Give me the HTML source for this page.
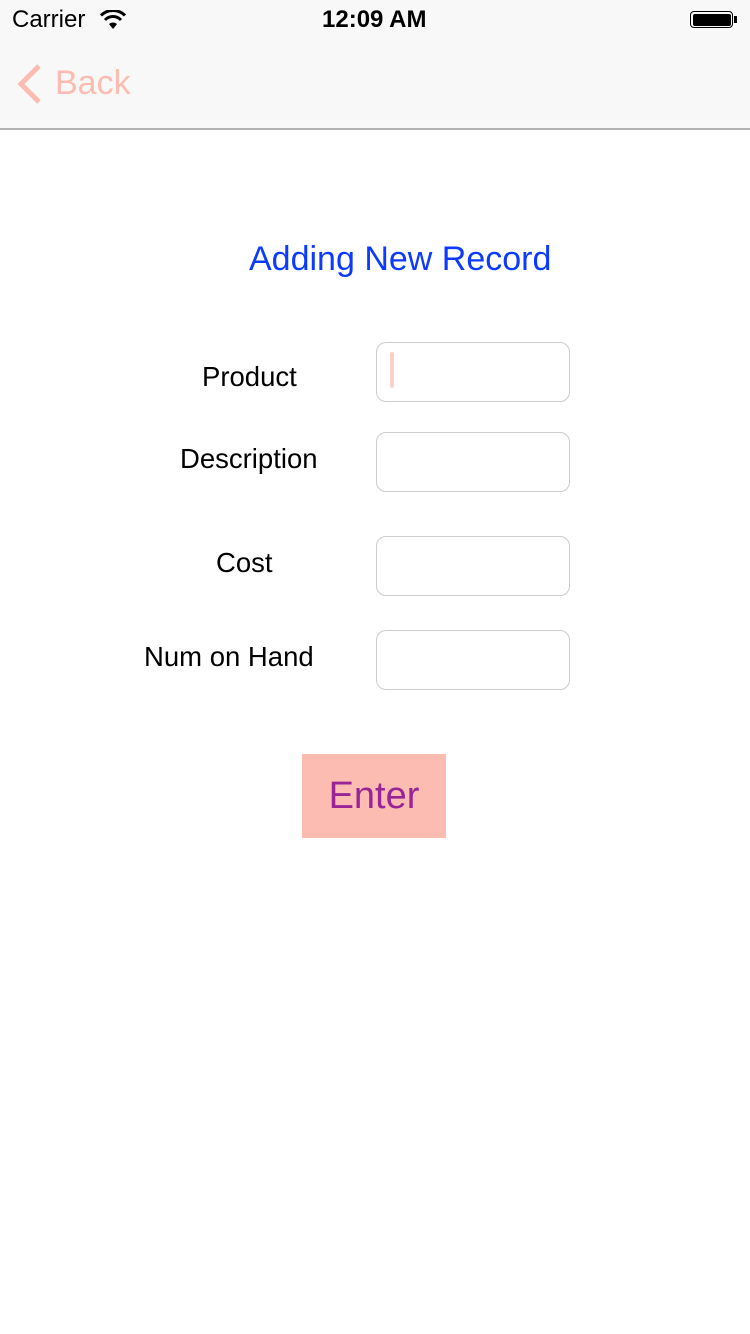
<!DOCTYPE html>
<html><head><meta charset="utf-8"><style>
body{margin:0;width:750px;height:1334px;background:#fff;font-family:"Liberation Sans",sans-serif;position:relative;overflow:hidden}
.a{position:absolute}
.nav{left:0;top:0;width:750px;height:128px;background:#f8f8f8;border-bottom:2px solid #b2b2b2}
.lbl{font-size:27.5px;color:#000}
.f{position:absolute;left:376px;width:192px;height:58px;border:1px solid #ccc;border-radius:10px;background:#fff}
</style></head><body>
<div class="a nav"></div>
<div class="a" style="left:12px;top:6px;font-size:24px">Carrier</div>
<svg class="a" style="left:100px;top:10px" width="26" height="20" viewBox="0 0 26 20"><path d="M13 19 L9 14 A6 6 0 0 1 17 14 Z" fill="#000"/><path d="M5 10 A11 11 0 0 1 21 10" stroke="#000" stroke-width="3" fill="none"/><path d="M1 5.5 A17 17 0 0 1 25 5.5" stroke="#000" stroke-width="3" fill="none"/></svg>
<div class="a" style="left:322px;top:6px;font-size:24px;font-weight:bold">12:09 AM</div>
<div class="a" style="left:690px;top:11px;width:43px;height:17px;border:1.5px solid #000;border-radius:4px;box-sizing:border-box;padding:1.5px"><div style="background:#000;width:100%;height:100%;border-radius:2px"></div></div>
<div class="a" style="left:734px;top:16px;width:3px;height:7px;background:#000"></div>
<svg class="a" style="left:14px;top:62px" width="30" height="44" viewBox="0 0 30 44"><path d="M25 4 L7 22 L25 40" stroke="#fcbcb1" stroke-width="5" fill="none"/></svg>
<div class="a" style="left:55px;top:64px;font-size:34px;color:#fcbcb1">Back</div>
<div class="a" style="left:249px;top:240px;font-size:34px;color:#0c3bff">Adding New Record</div>
<div class="a lbl" style="left:202px;top:361px">Product</div>
<div class="a lbl" style="left:180px;top:443px">Description</div>
<div class="a lbl" style="left:216px;top:547px">Cost</div>
<div class="a lbl" style="left:144px;top:641px">Num on Hand</div>
<div class="f" style="top:342px"><div class="a" style="left:13px;top:9px;width:4px;height:36px;background:#fcd0c8;border-radius:2px"></div></div>
<div class="f" style="top:432px"></div>
<div class="f" style="top:536px"></div>
<div class="f" style="top:630px"></div>
<div class="a" style="left:302px;top:754px;width:144px;height:84px;background:#fcbcb1;color:#9a2497;font-size:38px;text-align:center;line-height:84px">Enter</div>
</body></html>
